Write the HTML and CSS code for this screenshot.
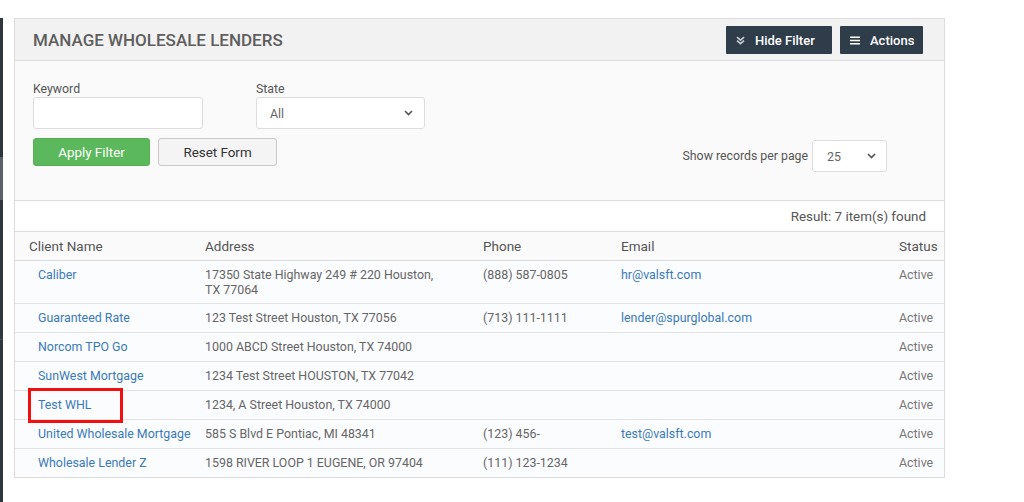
FILE: index.html
```html
<!DOCTYPE html>
<html>
<head>
<meta charset="utf-8">
<link rel="stylesheet" href="styles.css">
</head>
<body>
<div class="page">
  <div class="sidebar"></div>
  <div class="panel">
    <div class="panel-head">
      <h1 class="title">MANAGE WHOLESALE LENDERS</h1>
      <div class="head-actions">
        <button class="btn-dark hide">
          <svg width="9" height="9" viewBox="0 0 9 9"><path d="M1 1.2 L4.5 4.2 L8 1.2 M1 4.6 L4.5 7.6 L8 4.6" fill="none" stroke="#c9ced3" stroke-width="1.6"/></svg>
          <span>Hide Filter</span>
        </button>
        <button class="btn-dark act">
          <svg width="10" height="9" viewBox="0 0 10 9"><path d="M0 1.2 H10 M0 4.5 H10 M0 7.8 H10" stroke="#fff" stroke-width="1.6"/></svg>
          <span>Actions</span>
        </button>
      </div>
    </div>
    <div class="filter">
      <div class="fields">
        <div class="field keyword">
          <label class="lbl">Keyword</label>
          <div class="input"></div>
        </div>
        <div class="field state">
          <label class="lbl">State</label>
          <div class="select">
            <span>All</span>
            <svg width="9" height="6" viewBox="0 0 9 6"><path d="M1 1 L4.5 4.5 L8 1" fill="none" stroke="#555" stroke-width="1.6"/></svg>
          </div>
        </div>
      </div>
      <div class="filter-bottom">
        <div class="btns">
          <button class="btn-green">Apply Filter</button>
          <button class="btn-light">Reset Form</button>
        </div>
        <div class="per-page">
          <span>Show records per page</span>
          <div class="select small">
            <span>25</span>
            <svg width="9" height="6" viewBox="0 0 9 6"><path d="M1 1 L4.5 4.5 L8 1" fill="none" stroke="#555" stroke-width="1.6"/></svg>
          </div>
        </div>
      </div>
    </div>
    <div class="result">Result: 7 item(s) found</div>
    <table class="grid">
      <colgroup>
        <col class="c1"><col class="c2"><col class="c3"><col class="c4"><col class="c5">
      </colgroup>
      <thead>
        <tr><th>Client Name</th><th>Address</th><th>Phone</th><th>Email</th><th>Status</th></tr>
      </thead>
      <tbody>
        <tr><td class="name"><a>Caliber</a></td><td class="addr">17350 State Highway 249 # 220 Houston, TX 77064</td><td>(888) 587-0805</td><td><a>hr@valsft.com</a></td><td class="status">Active</td></tr>
        <tr><td class="name"><a>Guaranteed Rate</a></td><td class="addr">123 Test Street Houston, TX 77056</td><td>(713) 111-1111</td><td><a>lender@spurglobal.com</a></td><td class="status">Active</td></tr>
        <tr><td class="name"><a>Norcom TPO Go</a></td><td class="addr">1000 ABCD Street Houston, TX 74000</td><td></td><td></td><td class="status">Active</td></tr>
        <tr><td class="name"><a>SunWest Mortgage</a></td><td class="addr">1234 Test Street HOUSTON, TX 77042</td><td></td><td></td><td class="status">Active</td></tr>
        <tr><td class="name marked"><a>Test WHL</a><span class="highlight"></span></td><td class="addr">1234, A Street Houston, TX 74000</td><td></td><td></td><td class="status">Active</td></tr>
        <tr><td class="name"><a>United Wholesale Mortgage</a></td><td class="addr">585 S Blvd E Pontiac, MI 48341</td><td>(123) 456-</td><td><a>test@valsft.com</a></td><td class="status">Active</td></tr>
        <tr><td class="name"><a>Wholesale Lender Z</a></td><td class="addr">1598 RIVER LOOP 1 EUGENE, OR 97404</td><td>(111) 123-1234</td><td></td><td class="status">Active</td></tr>
      </tbody>
    </table>
  </div>
</div>
</body>
</html>
```

FILE: styles.css
```css
* { box-sizing: border-box; }
html, body { margin: 0; padding: 0; background: #fff; }
body { font-family: Roboto, "Liberation Sans", Arial, sans-serif; color: #555; font-size: 12.4px; }

.page {
  display: flex;
  align-items: stretch;
  min-height: 502px;
  padding-top: 18px;
}
.sidebar {
  width: 3px;
  flex: none;
  background: linear-gradient(to bottom,
    #2f363d 0, #2f363d 139px,
    #5b6066 139px, #5b6066 182px,
    #2f363d 182px, #2f363d 321px,
    #4a5056 321px, #4a5056 322px,
    #2f363d 322px);
}
.panel {
  margin-left: 11px;
  width: 931px;
  align-self: flex-start;
  border: 1px solid #dcdcdc;
  background: #fafafa;
}
.panel-head {
  height: 42px;
  background: #f2f2f2;
  border-bottom: 1px solid #dcdcdc;
  display: flex;
  align-items: center;
  justify-content: space-between;
  padding: 0 21px 0 18px;
}
.title {
  margin: 0;
  font-size: 17px;
  font-weight: 500;
  color: #5e5e5e;
}
.head-actions { display: flex; gap: 8px; margin-top: 1px; }
.btn-dark {
  height: 28px;
  border: 0;
  border-radius: 1px;
  background: #2f3d4b;
  color: #fff;
  font-family: Roboto, "Liberation Sans", Arial, sans-serif;
  font-size: 13px;
  font-weight: 500;
  display: flex;
  align-items: center;
  padding: 0;
}
.btn-dark.hide { width: 106px; padding-left: 10px; gap: 10px; }
.btn-dark.act { width: 83px; padding-left: 10px; gap: 10px; }

.filter {
  border-bottom: 1px solid #dcdcdc;
  padding: 20px 57px 0 18px;
  height: 140px;
}
.fields { display: flex; gap: 53px; }
.field { display: flex; flex-direction: column; }
.keyword { width: 170px; }
.state { width: 169px; }
.lbl { font-size: 12.3px; line-height: 16px; color: #555; }
.input {
  height: 32px;
  background: #fff;
  border: 1px solid #ddd;
  border-radius: 3px;
}
.select {
  height: 32px;
  background: #fff;
  border: 1px solid #ddd;
  border-radius: 3px;
  display: flex;
  align-items: center;
  justify-content: space-between;
  padding: 0 11px 0 13px;
  color: #666;
  font-size: 12.4px;
}
.filter-bottom {
  display: flex;
  justify-content: space-between;
  align-items: flex-start;
  margin-top: 9px;
}
.btns { display: flex; gap: 8px; }
.btn-green, .btn-light {
  height: 28px;
  border-radius: 3px;
  font-family: Roboto, "Liberation Sans", Arial, sans-serif;
  font-size: 13.4px;
  padding: 0;
}
.btn-green {
  width: 117px;
  background: #5cb85c;
  border: 1px solid #55b055;
  color: #fff;
}
.btn-light {
  width: 119px;
  background: #f4f4f4;
  border: 1px solid #c8c8c8;
  color: #333;
}
.per-page {
  display: flex;
  align-items: center;
  gap: 4px;
  margin-top: 2px;
  font-size: 12.3px;
  color: #555;
}
.select.small { width: 75px; padding: 0 10px 0 14px; }

.result {
  height: 31px;
  background: #fff;
  border-bottom: 1px solid #dcdcdc;
  text-align: right;
  padding: 8px 18px 0 0;
  font-size: 13.4px;
  color: #555;
}

.grid {
  width: 929px;
  table-layout: fixed;
  border-collapse: collapse;
}
.c1 { width: 176px; }
.c2 { width: 278px; }
.c3 { width: 138px; }
.c4 { width: 278px; }
.c5 { width: 59px; }
.grid th {
  text-align: left;
  font-weight: 400;
  font-size: 13.5px;
  color: #555;
  line-height: 16px;
  padding: 6px 14px;
  background: #fafafa;
  border-bottom: 1px solid #dcdcdc;
  white-space: nowrap;
}
.grid td {
  vertical-align: top;
  font-size: 12.4px;
  line-height: 15px;
  color: #666;
  padding: 6px 14px 7px;
  background: #fbfcfe;
  border-bottom: 1px solid #e2e2e2;
}
.grid tbody tr:first-child td { padding-bottom: 6px; }
.grid tbody tr:last-child td { border-bottom: 0; }
.grid td.name { padding-left: 23px; white-space: nowrap; }
.grid td.addr { padding-right: 30px; }
.grid td.status { white-space: nowrap; color: #777; }
.grid a { color: #3a7ab8; text-decoration: none; }
.marked { position: relative; }
.highlight {
  position: absolute;
  left: 13px;
  top: -3px;
  width: 95px;
  height: 35px;
  border: 3px solid #f01010;
}
```
